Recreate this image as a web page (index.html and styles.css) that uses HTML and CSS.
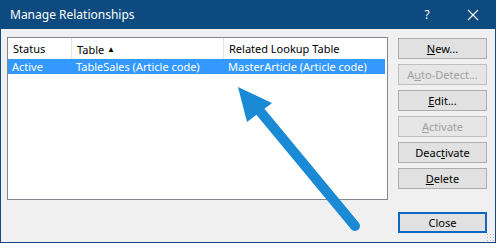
FILE: index.html
```html
<!doctype html>
<html lang="en">
    <head>
        <meta charset="UTF-8" />
        <title>Manage Relationships</title>
        <link rel="stylesheet" href="styles.css">
    </head>
    <body>
        <div class="window">
            <div class="titlebar">
                <span class="title">Manage Relationships</span>
                <span class="help">?</span>
                <span class="close-x">
                    <svg width="12" height="12" viewBox="0 0 12 12"><path d="M1 1L11 11M11 1L1 11" stroke="#fff" stroke-width="1.2"/></svg>
                </span>
            </div>
            <div class="content">
                <div class="list">
                    <div class="list-head">
                        <div class="col c1">Status</div>
                        <div class="col c2">Table <span class="sort">&#9650;</span></div>
                        <div class="col c3">Related Lookup Table</div>
                    </div>
                    <div class="list-row selected">
                        <div class="col c1">Active</div>
                        <div class="col c2">TableSales (Article code)</div>
                        <div class="col c3">MasterArticle (Article code)</div>
                    </div>
                </div>
                <div class="buttons">
                    <button class="btn"><u>N</u>ew...</button>
                    <button class="btn disabled">A<u>u</u>to-Detect...</button>
                    <button class="btn"><u>E</u>dit...</button>
                    <button class="btn disabled"><u>A</u>ctivate</button>
                    <button class="btn">Deac<u>t</u>ivate</button>
                    <button class="btn"><u>D</u>elete</button>
                    <button class="btn default">Close</button>
                </div>
            </div>
            <div class="grip"></div>
            <svg class="arrow" width="496" height="243" viewBox="0 0 496 243">
                <line x1="355" y1="226" x2="254" y2="104" stroke="#1b8ad4" stroke-width="10" stroke-linecap="round"/>
                <polygon points="238,87 272,103 247,122" fill="#1b8ad4"/>
            </svg>
        </div>
    </body>
</html>
```

FILE: styles.css
```css
body {
    margin: 0;
    font-family: "Noto Sans", "Open Sans", sans-serif;
    font-size: 11px;
    color: #000;
}
.window {
    position: relative;
    width: 496px;
    height: 243px;
    box-sizing: border-box;
    border: 1px solid #0c4a80;
    border-top: none;
    background: #f0f0f0;
    display: flex;
    flex-direction: column;
}
.titlebar {
    height: 30px;
    background: #0c4a80;
    color: #fff;
    display: flex;
    align-items: center;
    margin: 0 -1px;
    padding-left: 10px;
}
.title {
    font-size: 12px;
    flex: 1;
}
.help {
    font-size: 12px;
    width: 46px;
    text-align: center;
}
.close-x {
    width: 46px;
    display: flex;
    justify-content: center;
}
.content {
    display: flex;
    flex: 1;
    padding: 8px 6px 9px 6px;
}
.list {
    width: 379px;
    height: 161px;
    border: 1px solid #828790;
    background: #fff;
}
.list-head, .list-row {
    display: flex;
    white-space: nowrap;
}
.list-head {
    height: 21px;
    line-height: 21px;
}
.list-head .col {
    border-right: 1px solid #e5e5e5;
    padding-left: 5px;
}
.list-head .c3 {
    border-right: none;
}
.col {
    box-sizing: border-box;
}
.c1 { width: 64px; }
.c2 { width: 152px; }
.c3 { width: 161px; }
.list-row .col {
    padding-left: 4px;
}
.sort {
    font-size: 8px;
    vertical-align: 2px;
}
.list-row {
    height: 15px;
    line-height: 15px;
    width: 377px;
}
.selected {
    background: #3399ff;
    color: #fff;
}
.buttons {
    margin-left: 10px;
    display: flex;
    flex-direction: column;
    gap: 5px;
    padding-top: 1px;
}
.btn {
    width: 89px;
    height: 21px;
    padding: 0;
    background: #e1e1e1;
    border: 1px solid #adadad;
    font-family: inherit;
    font-size: 11px;
    color: #000;
    white-space: nowrap;
}
.btn.disabled {
    color: #a0a0a0;
    border-color: #bfbfbf;
    background: #e6e6e6;
}
.btn.default {
    margin-top: 18px;
    border: 2px solid #0c68c0;
}
.grip {
    position: absolute;
    right: 1px;
    bottom: 1px;
    width: 8px;
    height: 8px;
    background: radial-gradient(circle, #b0b0b0 0.8px, transparent 1px) 0 0 / 3px 3px;
}
.arrow {
    position: absolute;
    left: -1px;
    top: 0;
    pointer-events: none;
}
```
